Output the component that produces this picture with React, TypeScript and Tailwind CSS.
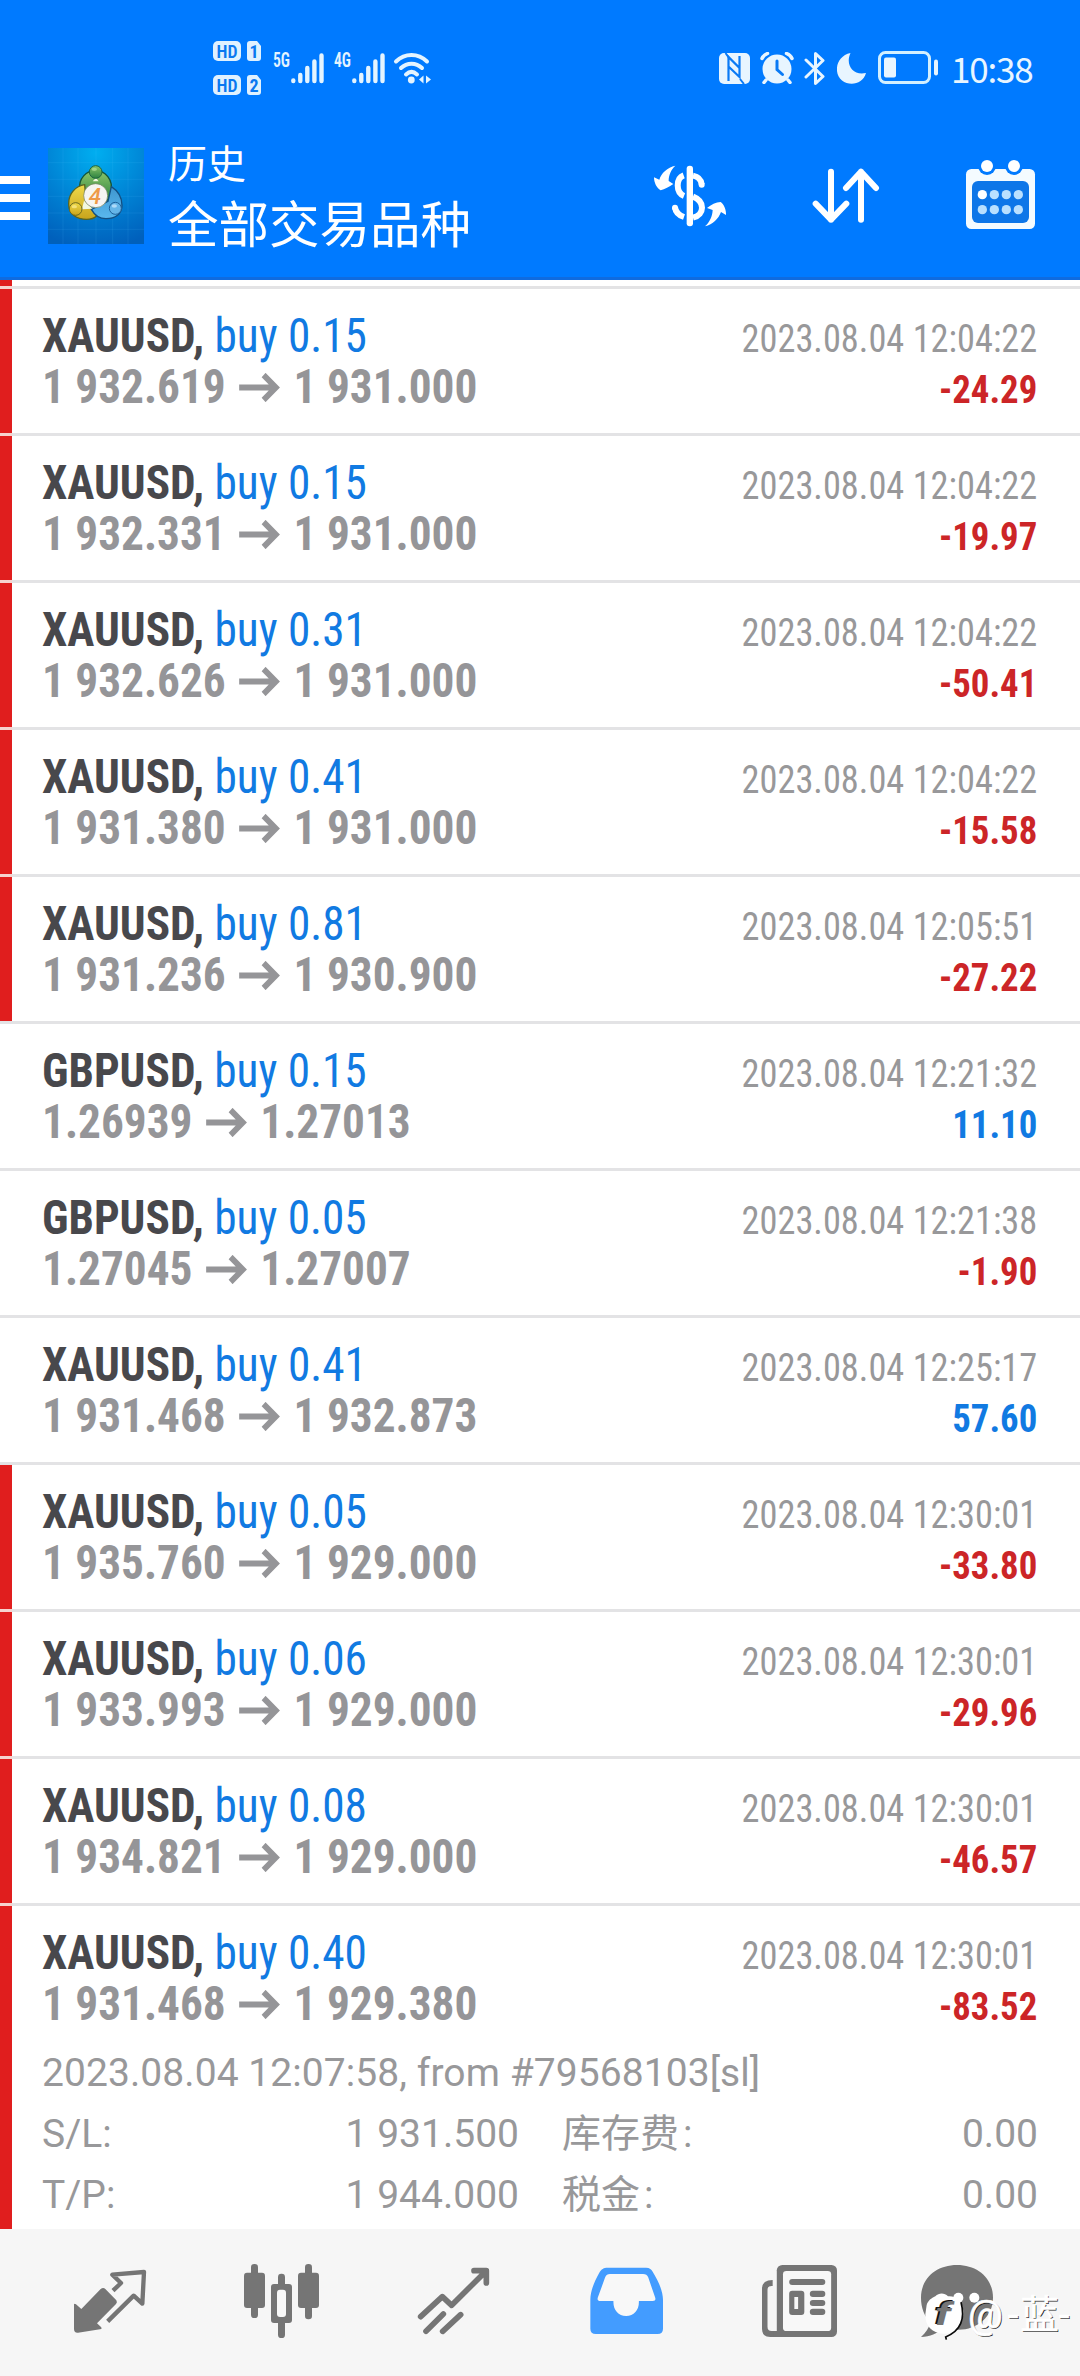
import React from 'react';

type Deal = {
  symbol: string;
  volume: string;
  open: string;
  close: string;
  time: string;
  profit: string;
  stopped: boolean;
};

const deals: Deal[] = [
  { symbol: 'XAUUSD', volume: '0.15', open: '1 932.619', close: '1 931.000', time: '2023.08.04 12:04:22', profit: '-24.29', stopped: true },
  { symbol: 'XAUUSD', volume: '0.15', open: '1 932.331', close: '1 931.000', time: '2023.08.04 12:04:22', profit: '-19.97', stopped: true },
  { symbol: 'XAUUSD', volume: '0.31', open: '1 932.626', close: '1 931.000', time: '2023.08.04 12:04:22', profit: '-50.41', stopped: true },
  { symbol: 'XAUUSD', volume: '0.41', open: '1 931.380', close: '1 931.000', time: '2023.08.04 12:04:22', profit: '-15.58', stopped: true },
  { symbol: 'XAUUSD', volume: '0.81', open: '1 931.236', close: '1 930.900', time: '2023.08.04 12:05:51', profit: '-27.22', stopped: true },
  { symbol: 'GBPUSD', volume: '0.15', open: '1.26939', close: '1.27013', time: '2023.08.04 12:21:32', profit: '11.10', stopped: false },
  { symbol: 'GBPUSD', volume: '0.05', open: '1.27045', close: '1.27007', time: '2023.08.04 12:21:38', profit: '-1.90', stopped: false },
  { symbol: 'XAUUSD', volume: '0.41', open: '1 931.468', close: '1 932.873', time: '2023.08.04 12:25:17', profit: '57.60', stopped: false },
  { symbol: 'XAUUSD', volume: '0.05', open: '1 935.760', close: '1 929.000', time: '2023.08.04 12:30:01', profit: '-33.80', stopped: true },
  { symbol: 'XAUUSD', volume: '0.06', open: '1 933.993', close: '1 929.000', time: '2023.08.04 12:30:01', profit: '-29.96', stopped: true },
  { symbol: 'XAUUSD', volume: '0.08', open: '1 934.821', close: '1 929.000', time: '2023.08.04 12:30:01', profit: '-46.57', stopped: true },
  { symbol: 'XAUUSD', volume: '0.40', open: '1 931.468', close: '1 929.380', time: '2023.08.04 12:30:01', profit: '-83.52', stopped: true },
];

const HdBadge: React.FC<{ sim: string }> = ({ sim }) => (
  <svg className="overflow-visible" width="48" height="20" viewBox="0 0 48 20">
    <rect width="28" height="20" rx="5" fill="#dff1ff" />
    <text x="14" y="16.500" textAnchor="middle" fontFamily="Roboto Condensed, sans-serif" fontWeight="600" fontSize="19" textLength="21" lengthAdjust="spacingAndGlyphs" fill="#0a78f0">HD</text>
    <path d="M37 0h7l4 5v12a3 3 0 0 1-3 3h-8a3 3 0 0 1-3-3V3a3 3 0 0 1 3-3z" fill="#dff1ff" />
    <text x="41" y="16.500" textAnchor="middle" fontFamily="Roboto Condensed, sans-serif" fontWeight="700" fontSize="18" fill="#0a78f0">{sim}</text>
  </svg>
);

const Signal: React.FC<{ network: string }> = ({ network }) => (
  <svg className="overflow-visible" width="51" height="32" viewBox="0 0 51 32" stroke="#e4f4ff" strokeWidth="4.4" strokeLinecap="round">
    <text x="0" y="14.500" stroke="none" fill="#e4f4ff" fontFamily="Roboto Condensed, sans-serif" fontWeight="600" fontSize="20" textLength="17" lengthAdjust="spacingAndGlyphs">{network}</text>
    <path d="M20.300 28.500v.5M27.300 23v6M34.300 16v13M41.400 9.500V29M48.500 3.500V29" />
  </svg>
);

const StatusBar: React.FC = () => (
  <div className="flex h-[136px] items-center pl-[213px] pr-[46px] text-[#e8f5ff]">
    <div className="flex flex-col gap-[14px]">
      <HdBadge sim="1" />
      <HdBadge sim="2" />
    </div>
    <div className="ml-3 flex gap-[10px]">
      <Signal network="5G" />
      <Signal network="4G" />
    </div>
    <svg className="ml-[8px]" width="38" height="32" viewBox="0 0 38 32" fill="none" stroke="#e4f4ff" strokeWidth="4" strokeLinecap="round">
      <path d="M3 9.500C12 .800 25 .800 34 9.500M8 16c6-5.800 15-5.800 21 0M13 22.500c3.500-3.300 7.500-3.300 11 0" />
      <circle cx="18.300" cy="28" r="3.400" fill="#e4f4ff" stroke="none" />
      <path d="M30.500 23.500v8L26 27.500zM33 23.500v8l5-4z" fill="#e4f4ff" stroke="none" />
    </svg>

    <div className="ml-auto flex items-center">
      <svg width="31" height="31" viewBox="0 0 31 31">
        <rect width="31" height="31" rx="5" fill="#e8f5ff" />
        <path d="M9.500 28V4l11 11v9l-11-10.500M9.500 4M20.500 24V3" fill="none" stroke="#0a7af5" strokeWidth="2.200" />
        <path d="M6.500 0L10 5M21 26l4 5" stroke="#0a7af5" strokeWidth="2" />
      </svg>
      <svg className="ml-[10px]" width="34" height="32" viewBox="0 0 34 32" fill="none" strokeLinecap="round">
        <circle cx="17" cy="17" r="14.500" fill="#e8f5ff" />
        <path d="M2 6.500C3 4 5 2.500 7.500 1.500M32 6.500C31 4 29 2.500 26.500 1.500M6 28l-2 2.500M28 28l2 2.500" stroke="#e8f5ff" strokeWidth="3.500" />
        <path d="M17 9v8.500l5.500 5" stroke="#0a7af5" strokeWidth="3" />
      </svg>
      <svg className="ml-[10px]" width="22" height="35" viewBox="0 0 22 35" fill="none" stroke="#e8f5ff" strokeWidth="3" strokeLinejoin="round" strokeLinecap="round">
        <path d="M2 9l17 16.500-7.500 7V2.500l7.500 7L2 26" />
      </svg>
      <svg className="ml-[11px]" width="29" height="31" viewBox="0 0 29 31">
        <path d="M13.500 0C-1 3-4 20 5 27.500c8 6 21 3.500 24-7.500C16 23 8 12 13.500 0z" fill="#e8f5ff" />
      </svg>
      <svg className="ml-[12px]" width="61" height="34" viewBox="0 0 61 34">
        <rect x="1.500" y="1.500" width="50" height="30" rx="6" fill="none" stroke="#d2efff" strokeWidth="3" />
        <rect x="6" y="6.500" width="12" height="20" rx="2" fill="#e8f5ff" />
        <rect x="56" y="8.500" width="4" height="16" rx="2" fill="#e8f5ff" />
      </svg>
      <span className="ml-[12px] w-[83px] whitespace-nowrap font-['Noto_Sans_CJK_SC',sans-serif] text-[35px] leading-[40px] tracking-[-1.2px]">10:38</span>
    </div>
  </div>
);

const AppLogo: React.FC = () => (
  <svg className="ml-[18px]" width="96" height="96" viewBox="12 12 288 288">
    <defs>
      <radialGradient id="sky" cx="0.5" cy="0.05" r="1">
        <stop offset="0" stopColor="#00aef0" />
        <stop offset="0.55" stopColor="#0082d4" />
        <stop offset="1" stopColor="#0060bc" />
      </radialGradient>
      <linearGradient id="green" x2="0" y2="1">
        <stop offset="0" stopColor="#8cc66a" />
        <stop offset="1" stopColor="#2c8240" />
      </linearGradient>
      <linearGradient id="yellow" x2="0" y2="1">
        <stop offset="0" stopColor="#efd94a" />
        <stop offset="1" stopColor="#c8a41c" />
      </linearGradient>
      <linearGradient id="blue" x2="0" y2="1">
        <stop offset="0" stopColor="#3f96cf" />
        <stop offset="1" stopColor="#5ab8ee" />
      </linearGradient>
    </defs>
    <rect x="12" y="12" width="288" height="288" fill="url(#sky)" />
    <path d="M57 12v288M102 12v288M156 12v288M206 12v288M252 12v288M12 56h288M12 106h288M12 157h288M12 207h288M12 256h288" stroke="#4cc4ff" strokeOpacity=".13" strokeWidth="3" />
    <path d="M107 138c-4-36 20-58 48-58s54 26 46 66c-2 14-8 20-14 24l-60-16z" fill="url(#green)" stroke="#14553a" strokeWidth="4" />
    <path d="M122 122c-28 4-49 28-48 58 0 30 24 46 54 46 10 0 24-4 30-10l-32-46z" fill="url(#yellow)" stroke="#5a6420" strokeWidth="4" />
    <path d="M202 128c22 14 32 32 32 56 0 26-20 40-48 40-20 0-34-10-44-28l50-24z" fill="url(#blue)" stroke="#134f82" strokeWidth="4" />
    <path d="M120 170l-6 26 32-2M190 176l6 8M146 112h18l-8-10z" fill="#f2f8e0" />
    <circle cx="155" cy="84" r="19" fill="url(#green)" stroke="#1d6440" strokeWidth="3" />
    <circle cx="95" cy="195" r="19" fill="url(#yellow)" stroke="#6a6a20" strokeWidth="3" />
    <circle cx="214" cy="193" r="18" fill="#65b5e8" stroke="#1d609a" strokeWidth="3" />
    <ellipse cx="151" cy="76" rx="8" ry="5" fill="#b5e09a" opacity=".7" />
    <ellipse cx="91" cy="188" rx="8" ry="5" fill="#fff3a0" opacity=".6" />
    <ellipse cx="211" cy="186" rx="8" ry="5" fill="#cfeaff" opacity=".7" />
    <circle cx="155" cy="155" r="36" fill="#f6f5f2" stroke="#6b7c58" strokeWidth="2" />
    <text x="153" y="179" textAnchor="middle" fontFamily="Roboto, sans-serif" fontWeight="500" fontStyle="italic" fontSize="67" fill="#ee9a48">4</text>
  </svg>
);

const Toolbar: React.FC = () => (
  <div className="flex h-[120px] items-center pr-[44px]">
    <div className="mt-1 flex w-[30px] flex-col gap-[10px]">
      <span className="h-2 bg-white" />
      <span className="h-2 bg-white" />
      <span className="h-2 bg-white" />
    </div>
    <AppLogo />
    <div className="-mt-[10px] ml-[24px] whitespace-nowrap font-['Noto_Sans_CJK_SC',sans-serif] text-white">
      <div className="text-[39px] leading-[60px]">历史</div>
      <div className="text-[50.5px] leading-[60px]">全部交易品种</div>
    </div>

    <svg className="ml-auto" width="74" height="62" viewBox="99 105 222 186" fill="#fff">
      <rect x="200" y="107" width="19" height="182" rx="9" />
      <g fill="none" stroke="#fff" strokeWidth="18">
        <path d="M191 136c-24 9-24 52 1 62M219 137c16 3 24 12 26 26" />
        <path d="M165 232c2 16 12 24 27 29M219 200c36 14 36 54 0 63" />
      </g>
      <circle cx="245" cy="164" r="9" />
      <circle cx="165" cy="233" r="9" />
      <path d="M166 107c-24 5-42 22-48 42l-16-7c0 16 8 32 20 39 12-4 26-11 38-19l-14-9c0-18 7-34 20-46z" />
      <path d="M255 289c24-6 40-22 48-43l15 9c1-15-6-32-16-39-14 1-29 8-41 18l17 6c-1 20-9 36-23 49z" />
    </svg>
    <svg className="ml-[85px]" width="68" height="56" viewBox="576 114 204 168" fill="none" stroke="#fff" strokeWidth="18" strokeLinecap="round" strokeLinejoin="round">
      <path d="M633 125v144M587 221l46 48 46-48M723 269V125M678 174l45-49 45 49" />
    </svg>
    <svg className="-mt-[3px] ml-[85px]" width="71" height="71" viewBox="1035 87 213 213">
      <rect x="1038" y="117" width="207" height="180" rx="16" fill="#f4fbff" />
      <rect x="1056" y="153" width="171" height="126" rx="18" fill="#0d76e8" />
      <circle cx="1101" cy="108" r="27" fill="#007aff" />
      <circle cx="1182" cy="108" r="27" fill="#007aff" />
      <circle cx="1101" cy="108" r="18" fill="#fff" />
      <circle cx="1182" cy="108" r="18" fill="#fff" />
      <g fill="#b9e0ff">
        <circle cx="1087" cy="194" r="14" fill="#fff" />
        <circle cx="1123" cy="194" r="14" />
        <circle cx="1159" cy="194" r="14" />
        <circle cx="1195" cy="194" r="14" />
        <circle cx="1087" cy="239" r="14" />
        <circle cx="1123" cy="239" r="14" />
        <circle cx="1159" cy="239" r="14" />
        <circle cx="1195" cy="239" r="14" />
      </g>
    </svg>
  </div>
);

const PriceArrow: React.FC = () => (
  <svg className="mx-[14px] inline-block align-[1px]" width="44" height="29" viewBox="0 0 44 29" fill="none" stroke="#959598" strokeWidth="6">
    <path d="M0 14.500h39M26 2l13 12.500L26 27" />
  </svg>
);

const Stripe: React.FC<{ on: boolean }> = ({ on }) => (
  <div className={on ? 'w-3 shrink-0 bg-[#e01e1e]' : 'w-3 shrink-0'} />
);

const Divider: React.FC<{ on: boolean }> = ({ on }) => (
  <div className="flex h-[3px] bg-[#e3e3e5]">
    {on && <div className="w-3 bg-[#f6d3cf]" />}
  </div>
);

const DealRow: React.FC<{ deal: Deal }> = ({ deal }) => (
  <div className="flex h-36 justify-between whitespace-nowrap pl-[30px] pr-[43px] font-['Roboto_Condensed',sans-serif]">
    <div className="origin-left scale-x-[0.943] pt-[21px] text-[48px] leading-[51px]">
      <div className="text-[#117ae2]">
        <span className="font-bold text-[#48484c]">{deal.symbol},</span> buy {deal.volume}
      </div>
      <div className="font-bold text-[#959598]">
        {deal.open}
        <PriceArrow />
        {deal.close}
      </div>
    </div>
    <div className="pt-[25px] text-right text-[39px] leading-[51px]">
      <div className="origin-right scale-x-[0.932] text-[#98989a]">{deal.time}</div>
      <div className={deal.profit.startsWith('-') ? 'origin-right scale-x-[0.943] font-bold text-[#cc2527]' : 'origin-right scale-x-[0.943] font-bold text-[#117ae2]'}>
        {deal.profit}
      </div>
    </div>
  </div>
);

const DealDetails: React.FC = () => (
  <div className="-mt-[7px] pl-[30px] pr-[42px] font-['Roboto','Noto_Sans_CJK_SC',sans-serif] text-[39px] leading-[61px] text-[#98989a]">
    <div className="h-[61px] tracking-[0.07px]">2023.08.04 12:07:58, from #79568103[sl]</div>
    <div className="flex h-[61px]">
      <span>S/L:</span>
      <span className="ml-auto">1 931.500</span>
      <span className="ml-[43px] flex w-[476px] justify-between">
        <span>库存费<span className="ml-1">:</span></span>
        <span>0.00</span>
      </span>
    </div>
    <div className="flex h-[61px]">
      <span>T/P:</span>
      <span className="ml-auto">1 944.000</span>
      <span className="ml-[43px] flex w-[476px] justify-between">
        <span>税金<span className="ml-1">:</span></span>
        <span>0.00</span>
      </span>
    </div>
  </div>
);

const BottomNav: React.FC = () => (
  <nav className="relative flex h-[147px] items-center bg-[#f6f6f6] pb-[3px] pl-[73px]">
    {/* quotes */}
    <svg width="74" height="65" viewBox="99 150 222 195" fill="#757575">
      <path d="M102 256q2-4 6 0l16 14 58-60q8-6 14 0l33 34q4 6-1 11l-57 58 12 11q5 6-3 7l-66 10q-12 1-12-11z" />
      <path d="M219 215l24-23-26-25 95-8-5 95-26-24-78 77" fill="none" stroke="#757575" strokeWidth="13" strokeLinejoin="round" strokeLinecap="butt" />
    </svg>
    {/* charts */}
    <svg className="ml-[96px]" width="77" height="76" viewBox="609 132 231 228" fill="#757575">
      <rect x="633" y="135" width="21" height="162" rx="10" />
      <rect x="612" y="161" width="63" height="106" rx="9" />
      <rect x="795" y="135" width="21" height="166" rx="10" />
      <rect x="774" y="161" width="63" height="106" rx="9" />
      <rect x="714" y="164" width="21" height="193" rx="10" />
      <rect x="693" y="195" width="63" height="117" rx="9" />
      <rect x="711" y="212" width="27" height="82" rx="9" fill="#f8f8f8" />
    </svg>
    {/* trade */}
    <svg className="ml-[97px]" width="73" height="68" viewBox="1131 141 219 204" fill="none" stroke="#757575" strokeWidth="17" strokeLinecap="round" strokeLinejoin="round">
      <path d="M1142 290l65-60 28 26 101-101M1302 152h37v37" />
      <path d="M1158 334l52-52M1208 334l54-50" />
    </svg>
    {/* history */}
    <svg className="ml-[100px]" width="73" height="68" viewBox="145 141 212 204" preserveAspectRatio="none">
      <path d="M196 143h112c10 0 16 5 19 12 18 30 30 60 30 85v86q0 16-16 16H162q-16 0-16-16v-86c0-28 12-56 26-82 6-11 13-15 24-15z" fill="#439cff" />
      <path d="M203 162h96c8 0 12 3 15 10l20 60q4 11-7 11h-40c1 28-14 45-37 45s-38-17-37-45h-37q-12 0-8-11l21-60c3-7 7-10 14-10z" fill="#f8f8f8" />
    </svg>
    {/* news */}
    <svg className="ml-[99px]" width="75" height="72" viewBox="646 135 218 216" preserveAspectRatio="none" fill="#757575">
      <path d="M677 180v18q-15-2-15 12v110q0 13 12 13h16v18h-20q-24 0-24-24V206q0-26 31-26z" />
      <rect x="689" y="135" width="175" height="216" rx="16" />
      <path d="M680 333h30v18h-30z" />
      <rect x="707" y="153" width="140" height="180" rx="10" fill="#f8f8f8" />
      <rect x="725" y="177" width="105" height="18" rx="9" />
      <rect x="725" y="212" width="44" height="73" rx="9" />
      <rect x="740" y="231" width="11" height="36" fill="#f8f8f8" />
      <rect x="785" y="212" width="45" height="19" rx="9" />
      <rect x="785" y="240" width="45" height="18" rx="9" />
      <rect x="785" y="266" width="45" height="19" rx="9" />
    </svg>
    {/* messages, with the author mark laid over it */}
    <svg className="ml-[84px]" width="74" height="72" viewBox="36 30 222 216">
      <path d="M144 30c62 0 108 40 108 98 0 56-46 96-104 96-20 0-34-2-46-6-18 18-38 27-66 28 14-12 24-26 28-44-18-18-28-44-28-74 0-58 46-98 108-98z" fill="#757575" />
    </svg>
    <svg className="absolute right-0 top-[26px]" width="170" height="90" viewBox="0 0 510 270">
      <g fill="#fff">
        <circle cx="145" cy="128" r="15" />
        <circle cx="193" cy="128" r="15" />
        <path d="M50 150c4-14 14-20 26-26 12-12 28-10 38 0 24-2 44 14 46 44 2 38-22 70-60 68-34 0-56-26-54-58z" />
      </g>
      <path d="M153 142c14 52-2 86-46 104l2 8" fill="none" stroke="#0a0a0a" strokeWidth="5" />
      <g fontFamily="Roboto, sans-serif" fontWeight="700" fontStyle="italic" fontSize="92">
        <text x="70" y="207" textLength="48" lengthAdjust="spacingAndGlyphs" fill="#111">f</text>
        <text x="75" y="211" textLength="48" lengthAdjust="spacingAndGlyphs" fill="#757575">f</text>
      </g>
      <g fontFamily="Roboto, 'Noto Sans CJK SC', sans-serif" fontSize="116">
        <text y="221" fill="#222"><tspan x="177">@</tspan><tspan x="296">-</tspan><tspan x="334">蓝</tspan><tspan x="449">-</tspan></text>
        <text y="218" fill="#fff" stroke="#fff" strokeWidth="2"><tspan x="174">@</tspan><tspan x="293">-</tspan><tspan x="331">蓝</tspan><tspan x="446">-</tspan></text>
      </g>
    </svg>
  </nav>
);

const App: React.FC = () => {
  return (
    <div className="flex h-[2376px] w-[1080px] flex-col overflow-hidden bg-white">
      <header className="h-[280px] shrink-0 border-b-[3px] border-[#0f6bdf] bg-[#007aff]">
        <StatusBar />
        <Toolbar />
      </header>

      <main className="h-[1949px] shrink-0">
        <div className="flex h-[6px]">
          <Stripe on />
        </div>
        <Divider on />
        {deals.map((deal, index) => {
          const last = index === deals.length - 1;
          return (
            <React.Fragment key={index}>
              <div className="flex">
                <Stripe on={deal.stopped} />
                <div className="grow">
                  <DealRow deal={deal} />
                  {last && <DealDetails />}
                  {last && <div className="h-[3px]" />}
                </div>
              </div>
              {!last && <Divider on={deal.stopped && deals[index + 1].stopped} />}
            </React.Fragment>
          );
        })}
      </main>

      <BottomNav />
    </div>
  );
};

export default App;
